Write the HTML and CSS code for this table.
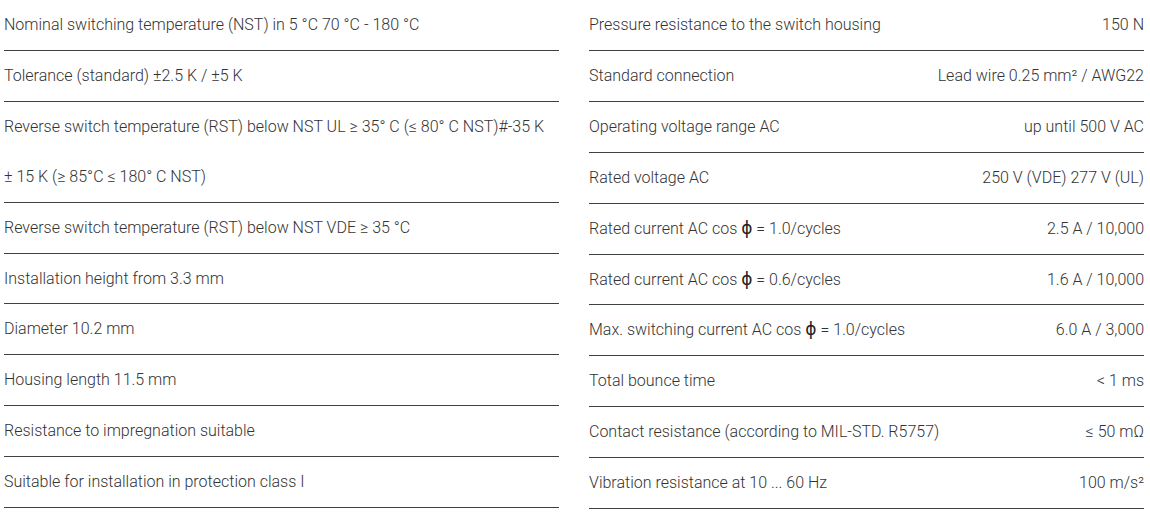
FILE: index.html
```html
<!DOCTYPE html>
<html lang="en">
<head>
<meta charset="utf-8">
<title>Technical data</title>
<link rel="stylesheet" href="styles.css">
</head>
<body>
<div class="specs">
  <div class="col">
    <div class="row">Nominal switching temperature (NST) in 5 °C 70 °C - 180 °C</div>
    <div class="row">Tolerance (standard) ±2.5 K / ±5 K</div>
    <div class="row">Reverse switch temperature (RST) below NST UL ≥ 35° C (≤ 80° C NST)#-35 K<br>± 15 K (≥ 85°C ≤ 180° C NST)</div>
    <div class="row">Reverse switch temperature (RST) below NST VDE ≥ 35 °C</div>
    <div class="row">Installation height from 3.3 mm</div>
    <div class="row">Diameter 10.2 mm</div>
    <div class="row">Housing length 11.5 mm</div>
    <div class="row">Resistance to impregnation suitable</div>
    <div class="row">Suitable for installation in protection class I</div>
  </div>
  <div class="col">
    <div class="row pair"><span>Pressure resistance to the switch housing</span><span>150 N</span></div>
    <div class="row pair"><span>Standard connection</span><span>Lead wire 0.25 mm² / AWG22</span></div>
    <div class="row pair"><span>Operating voltage range AC</span><span>up until 500 V AC</span></div>
    <div class="row pair"><span>Rated voltage AC</span><span>250 V (VDE) 277 V (UL)</span></div>
    <div class="row pair"><span>Rated current AC cos <span class="phi">ϕ</span> = 1.0/cycles</span><span>2.5 A / 10,000</span></div>
    <div class="row pair"><span>Rated current AC cos <span class="phi">ϕ</span> = 0.6/cycles</span><span>1.6 A / 10,000</span></div>
    <div class="row pair"><span>Max. switching current AC cos <span class="phi">ϕ</span> = 1.0/cycles</span><span>6.0 A / 3,000</span></div>
    <div class="row pair"><span>Total bounce time</span><span>&lt; 1 ms</span></div>
    <div class="row pair"><span>Contact resistance (according to MIL-STD. R5757)</span><span>≤ 50 mΩ</span></div>
    <div class="row pair"><span>Vibration resistance at 10 ... 60 Hz</span><span>100 m/s²</span></div>
  </div>
</div>
</body>
</html>
```
FILE: styles.css
```css
html, body {
  margin: 0;
  padding: 0;
  background: #ffffff;
}
body {
  font-family: Roboto, "Liberation Sans", sans-serif;
  font-weight: 300;
  font-size: 16px;
  color: #333333;
  padding: 0 6px 0 4px;
}
.specs {
  display: grid;
  grid-template-columns: 555px 555px;
  column-gap: 30px;
  align-items: start;
}
.col {
  display: flex;
  flex-direction: column;
}
.row {
  line-height: 49.9px;
  border-bottom: 1px solid #3d4343;
  white-space: nowrap;
}
.pair {
  display: flex;
  justify-content: space-between;
}
.phi {
  font-family: "DejaVu Sans", sans-serif;
  font-weight: 400;
  font-size: 17px;
  color: #222222;
}
```
